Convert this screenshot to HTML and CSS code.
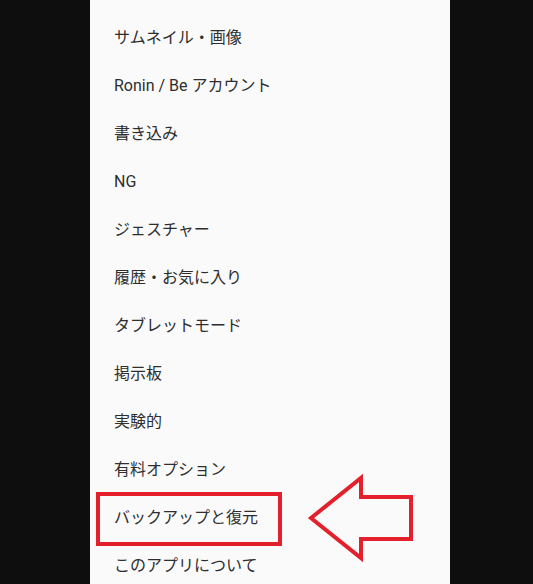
FILE: index.html
```html
<!DOCTYPE html>
<html lang="ja">
<head>
<meta charset="utf-8">
<link rel="stylesheet" href="styles.css">
</head>
<body>
<div class="panel">
  <ul class="menu">
    <li>サムネイル・画像</li>
    <li>Ronin / Be アカウント</li>
    <li>書き込み</li>
    <li>NG</li>
    <li>ジェスチャー</li>
    <li>履歴・お気に入り</li>
    <li>タブレットモード</li>
    <li>掲示板</li>
    <li>実験的</li>
    <li>有料オプション</li>
    <li>バックアップと復元</li>
    <li>このアプリについて</li>
  </ul>
</div>
<svg class="annot" width="533" height="584" viewBox="0 0 533 584">
  <rect x="98" y="494" width="182" height="50" fill="none" stroke="#e3202b" stroke-width="4"/>
  <polygon points="311,518 361,478 361,497 411,497 411,539 361,539 361,558" fill="none" stroke="#e3202b" stroke-width="4" stroke-linejoin="miter"/>
</svg>
</body>
</html>
```
FILE: styles.css
```css
html, body {
  margin: 0;
  padding: 0;
  background: #0e0e0e;
  height: 584px;
  overflow: hidden;
}
body {
  position: relative;
  font-family: Roboto, "Noto Sans CJK JP", sans-serif;
}
.panel {
  margin-left: 90px;
  width: 360px;
  height: 584px;
  background: #fafafa;
  padding-top: 14px;
  box-sizing: border-box;
}
.menu {
  list-style: none;
  margin: 0;
  padding: 0;
}
.menu li {
  height: 48px;
  line-height: 48px;
  padding-left: 24px;
  font-size: 16px;
  color: #2e2e2e;
}
.annot {
  position: absolute;
  left: 0;
  top: 0;
}
```
